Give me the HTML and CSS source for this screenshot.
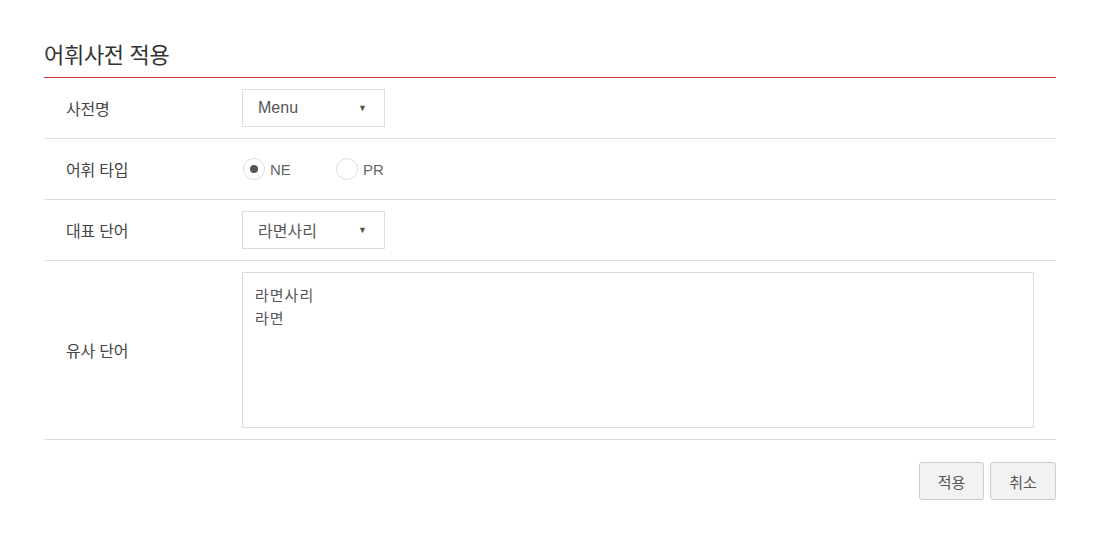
FILE: index.html
```html
<!DOCTYPE html>
<html lang="ko">
<head>
<meta charset="utf-8">
<link rel="stylesheet" href="styles.css">
</head>
<body>
<div class="panel">
  <h2 class="title">어휘사전 적용</h2>
  <div class="form">
    <div class="row">
      <div class="label">사전명</div>
      <div class="field">
        <div class="select"><span>Menu</span><span class="caret">▼</span></div>
      </div>
    </div>
    <div class="row">
      <div class="label">어휘 타입</div>
      <div class="field radios">
        <label class="radio"><span class="dot checked"></span>NE</label>
        <label class="radio"><span class="dot"></span>PR</label>
      </div>
    </div>
    <div class="row">
      <div class="label">대표 단어</div>
      <div class="field">
        <div class="select"><span>라면사리</span><span class="caret">▼</span></div>
      </div>
    </div>
    <div class="row tall">
      <div class="label">유사 단어</div>
      <div class="field">
        <div class="textarea">라면사리<br>라면</div>
      </div>
    </div>
  </div>
  <div class="actions">
    <button class="btn">적용</button>
    <button class="btn">취소</button>
  </div>
</div>
</body>
</html>
```
FILE: styles.css
```css
* { box-sizing: border-box; }
body {
  margin: 0;
  background: #fff;
  font-family: "Liberation Sans", "Noto Sans CJK KR", sans-serif;
  color: #333;
}
.panel {
  width: 1012px;
  margin-left: 44px;
  padding-top: 38px;
}
.title {
  margin: 0;
  font-size: 22px;
  font-weight: normal;
  color: #333;
  line-height: 30px;
  padding-bottom: 9px;
  border-bottom: 1px solid #d9343a;
  font-family: "Noto Sans CJK KR", sans-serif;
  letter-spacing: -0.3px;
}
.row {
  display: flex;
  align-items: center;
  height: 61px;
  border-bottom: 1px solid #ddd;
}
.row.tall { height: 179px; }
.label {
  width: 198px;
  padding-left: 22px;
  font-size: 16px;
  color: #444;
  font-family: "Noto Sans CJK KR", sans-serif;
  letter-spacing: -0.2px;
}
.field { flex: 1; }
.select {
  width: 143px;
  height: 38px;
  border: 1px solid #ddd;
  display: flex;
  align-items: center;
  justify-content: space-between;
  padding: 0 17px 0 15px;
  font-size: 16px;
  color: #555;
  font-family: "Liberation Sans", "Noto Sans CJK KR", sans-serif;
}
.caret { font-size: 9px; color: #555; }
.radios { display: flex; }
.radio {
  display: flex;
  align-items: center;
  font-size: 15px;
  color: #666;
  width: 93px;
}
.radio:first-child { margin-left: 1px; }
.dot {
  width: 22px;
  height: 22px;
  border: 1px solid #ddd;
  border-radius: 50%;
  margin-right: 5px;
  position: relative;
}
.dot.checked::after {
  content: "";
  position: absolute;
  left: 6px;
  top: 6px;
  width: 8px;
  height: 8px;
  border-radius: 50%;
  background: #555;
}
.textarea {
  width: 792px;
  height: 156px;
  border: 1px solid #ddd;
  padding: 10px 12px;
  font-size: 15px;
  line-height: 23px;
  letter-spacing: 1px;
  color: #555;
  font-family: "Noto Sans CJK KR", sans-serif;
}
.actions {
  display: flex;
  justify-content: flex-end;
  gap: 6px;
  padding-top: 22px;
}
.btn {
  height: 38px;
  width: 65px;
  background: #f2f2f2;
  border: 1px solid #ccc;
  border-radius: 3px;
  font-size: 15px;
  color: #555;
  font-family: "Noto Sans CJK KR", sans-serif;
}
.btn + .btn { width: 66px; }
```
